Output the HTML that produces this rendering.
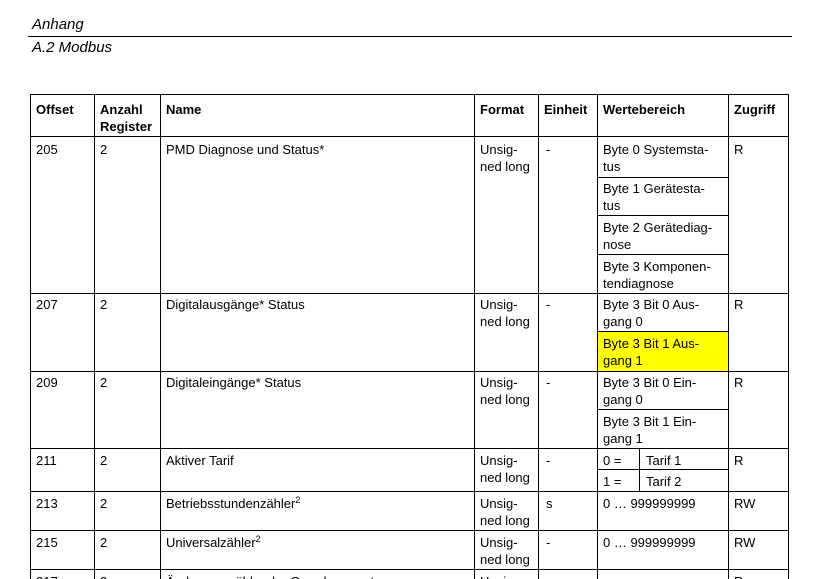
<!DOCTYPE html>
<html><head><meta charset="utf-8"><style>
html,body{margin:0;width:820px;height:579px;overflow:hidden}
body{background:#fff;position:relative;font-family:"Liberation Sans",Arial,sans-serif;color:#000}
.h{position:absolute;height:1px;background:#000}
.v{position:absolute;width:1px;background:#000}
.t{position:absolute;font-size:13px;line-height:17px;white-space:nowrap}
.b{font-weight:bold}
.i{position:absolute;font-style:italic;font-size:15px}
sup{font-size:9px;vertical-align:5px;line-height:0}
</style></head><body>
<div class="i" style="left:32px;top:16px">Anhang</div>
<div class="h" style="left:28px;top:36px;width:764px"></div>
<div class="i" style="left:32px;top:39px">A.2 Modbus</div>
<div style="position:absolute;left:598px;top:332px;width:130px;height:39px;background:#ffff00"></div>
<div class="h" style="left:30px;top:94px;width:759px"></div>
<div class="h" style="left:30px;top:136px;width:759px"></div>
<div class="h" style="left:597px;top:177px;width:131px"></div>
<div class="h" style="left:597px;top:215px;width:131px"></div>
<div class="h" style="left:597px;top:254px;width:131px"></div>
<div class="h" style="left:30px;top:293px;width:759px"></div>
<div class="h" style="left:597px;top:331px;width:131px"></div>
<div class="h" style="left:30px;top:371px;width:759px"></div>
<div class="h" style="left:597px;top:409px;width:131px"></div>
<div class="h" style="left:30px;top:448px;width:759px"></div>
<div class="h" style="left:597px;top:469px;width:131px"></div>
<div class="h" style="left:30px;top:491px;width:759px"></div>
<div class="h" style="left:30px;top:530px;width:759px"></div>
<div class="h" style="left:30px;top:569px;width:759px"></div>
<div class="v" style="left:30px;top:94px;height:490px"></div>
<div class="v" style="left:94px;top:94px;height:490px"></div>
<div class="v" style="left:160px;top:94px;height:490px"></div>
<div class="v" style="left:474px;top:94px;height:490px"></div>
<div class="v" style="left:538px;top:94px;height:490px"></div>
<div class="v" style="left:597px;top:94px;height:490px"></div>
<div class="v" style="left:728px;top:94px;height:490px"></div>
<div class="v" style="left:788px;top:94px;height:490px"></div>
<div class="v" style="left:639px;top:448px;height:43px"></div>
<div class="t b" style="left:36px;top:101px">Offset</div>
<div class="t b" style="left:100px;top:101px">Anzahl<br>Register</div>
<div class="t b" style="left:166px;top:101px">Name</div>
<div class="t b" style="left:480px;top:101px">Format</div>
<div class="t b" style="left:544px;top:101px">Einheit</div>
<div class="t b" style="left:603px;top:101px">Wertebereich</div>
<div class="t b" style="left:734px;top:101px">Zugriff</div>
<div class="t" style="left:36px;top:141px">205</div>
<div class="t" style="left:100px;top:141px">2</div>
<div class="t" style="left:166px;top:141px">PMD Diagnose und Status*</div>
<div class="t" style="left:480px;top:141px">Unsig-<br>ned long</div>
<div class="t" style="left:546px;top:141px">-</div>
<div class="t" style="left:603px;top:141px">Byte 0 Systemsta-<br>tus</div>
<div class="t" style="left:734px;top:141px">R</div>
<div class="t" style="left:603px;top:180px">Byte 1 Gerätesta-<br>tus</div>
<div class="t" style="left:603px;top:219px">Byte 2 Gerätediag-<br>nose</div>
<div class="t" style="left:603px;top:258px">Byte 3 Komponen-<br>tendiagnose</div>
<div class="t" style="left:36px;top:296px">207</div>
<div class="t" style="left:100px;top:296px">2</div>
<div class="t" style="left:166px;top:296px">Digitalausgänge* Status</div>
<div class="t" style="left:480px;top:296px">Unsig-<br>ned long</div>
<div class="t" style="left:546px;top:296px">-</div>
<div class="t" style="left:603px;top:296px">Byte 3 Bit 0 Aus-<br>gang 0</div>
<div class="t" style="left:734px;top:296px">R</div>
<div class="t" style="left:603px;top:335px">Byte 3 Bit 1 Aus-<br>gang 1</div>
<div class="t" style="left:36px;top:374px">209</div>
<div class="t" style="left:100px;top:374px">2</div>
<div class="t" style="left:166px;top:374px">Digitaleingänge* Status</div>
<div class="t" style="left:480px;top:374px">Unsig-<br>ned long</div>
<div class="t" style="left:546px;top:374px">-</div>
<div class="t" style="left:603px;top:374px">Byte 3 Bit 0 Ein-<br>gang 0</div>
<div class="t" style="left:734px;top:374px">R</div>
<div class="t" style="left:603px;top:413px">Byte 3 Bit 1 Ein-<br>gang 1</div>
<div class="t" style="left:36px;top:452px">211</div>
<div class="t" style="left:100px;top:452px">2</div>
<div class="t" style="left:166px;top:452px">Aktiver Tarif</div>
<div class="t" style="left:480px;top:452px">Unsig-<br>ned long</div>
<div class="t" style="left:546px;top:452px">-</div>
<div class="t" style="left:603px;top:452px">0 =</div>
<div class="t" style="left:646px;top:452px">Tarif 1</div>
<div class="t" style="left:603px;top:473px">1 =</div>
<div class="t" style="left:646px;top:473px">Tarif 2</div>
<div class="t" style="left:734px;top:452px">R</div>
<div class="t" style="left:36px;top:495px">213</div>
<div class="t" style="left:100px;top:495px">2</div>
<div class="t" style="left:166px;top:495px">Betriebsstundenzähler<sup>2</sup></div>
<div class="t" style="left:480px;top:495px">Unsig-<br>ned long</div>
<div class="t" style="left:546px;top:495px">s</div>
<div class="t" style="left:603px;top:495px">0 … 999999999</div>
<div class="t" style="left:734px;top:495px">RW</div>
<div class="t" style="left:36px;top:534px">215</div>
<div class="t" style="left:100px;top:534px">2</div>
<div class="t" style="left:166px;top:534px">Universalzähler<sup>2</sup></div>
<div class="t" style="left:480px;top:534px">Unsig-<br>ned long</div>
<div class="t" style="left:546px;top:534px">-</div>
<div class="t" style="left:603px;top:534px">0 … 999999999</div>
<div class="t" style="left:734px;top:534px">RW</div>
<div class="t" style="left:36px;top:573px">217</div>
<div class="t" style="left:100px;top:573px">2</div>
<div class="t" style="left:166px;top:573px">Änderungszähler der Grundparameter</div>
<div class="t" style="left:480px;top:573px">Unsig-</div>
<div class="t" style="left:734px;top:573px">R</div>
</body></html>
